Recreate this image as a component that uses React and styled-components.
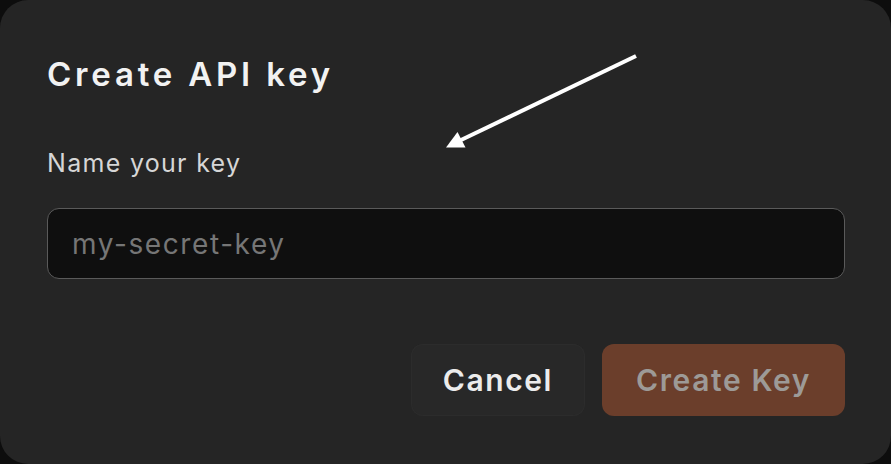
import React from "react";
import styled, { createGlobalStyle } from "styled-components";

const Global = createGlobalStyle`
  html, body { margin: 0; padding: 0; background: #0d0d0d; }
  body { width: 891px; height: 464px; overflow: hidden; }
  * { box-sizing: border-box; }
`;

const Dialog = styled.div`
  position: relative;
  width: 891px;
  height: 464px;
  background: #252525;
  border-radius: 28px;
  padding: 54px 46px 48px 47px;
  display: flex;
  flex-direction: column;
  font-family: Inter, "Liberation Sans", sans-serif;
`;

const Title = styled.h2`
  margin: 0;
  font-size: 33px;
  line-height: 40px;
  font-weight: 600;
  letter-spacing: 3.8px;
  color: #f2f2f2;
`;

const Label = styled.label`
  margin-top: 54px;
  font-size: 25px;
  line-height: 30px;
  font-weight: 400;
  letter-spacing: 1.3px;
  color: #d6d6d6;
`;

const Input = styled.input`
  margin-top: 30px;
  height: 71px;
  width: 100%;
  background: #0f0f0f;
  border: 1.5px solid #5a5a5a;
  border-radius: 12px;
  padding: 0 24px;
  font-family: Inter, "Liberation Sans", sans-serif;
  font-size: 28px;
  letter-spacing: 1.6px;
  color: #e0e0e0;
  outline: none;
  &::placeholder { color: #767676; }
`;

const Actions = styled.div`
  margin-top: 65px;
  display: flex;
  justify-content: flex-end;
  gap: 17px;
`;

const Button = styled.button`
  height: 72px;
  padding: 0 ${(p) => (p.$primary ? "34px" : "32px")};
  border-radius: 12px;
  border: none;
  font-family: Inter, "Liberation Sans", sans-serif;
  font-size: 30px;
  font-weight: 600;
  letter-spacing: 1.6px;
  background: ${(p) => (p.$primary ? "#6b3e2b" : "#282828")};
  color: ${(p) => (p.$primary ? "#9d9a97" : "#ececec")};
  box-shadow: ${(p) => (p.$primary ? "none" : "inset 0 0 0 1px #2c2c2c")};
`;

const Arrow = styled.svg`
  position: absolute;
  left: 0;
  top: 0;
  pointer-events: none;
`;

export default function App() {
  return (
    <>
      <Global />
      <Dialog>
        <Title>Create API key</Title>
        <Label>Name your key</Label>
        <Input placeholder="my-secret-key" />
        <Actions>
          <Button>Cancel</Button>
          <Button $primary>Create Key</Button>
        </Actions>
        <Arrow width="891" height="464" viewBox="0 0 891 464">
          <line x1="636" y1="56" x2="460" y2="140.5" stroke="#ffffff" strokeWidth="4" />
          <polygon points="446,147.5 465.5,147.5 457.5,132" fill="#ffffff" />
        </Arrow>
      </Dialog>
    </>
  );
}
